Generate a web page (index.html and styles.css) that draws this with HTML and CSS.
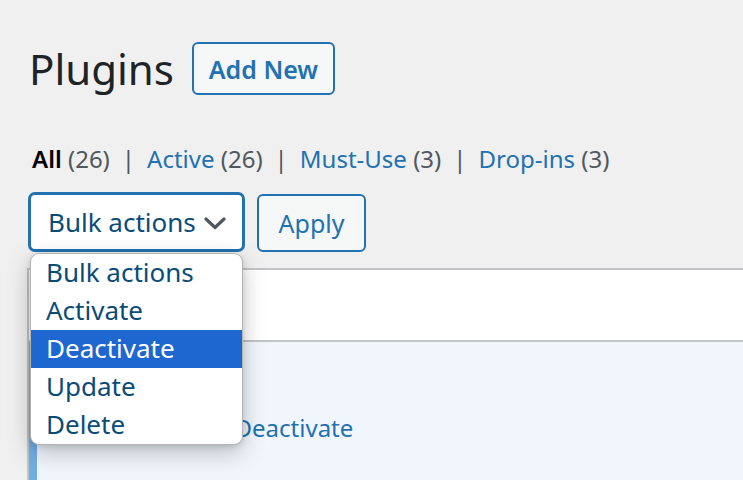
FILE: index.html
```html
<!DOCTYPE html>
<html lang="en">
<head>
<meta charset="utf-8">
<title>Plugins</title>
<link rel="stylesheet" href="styles.css">
</head>
<body>
<div class="wrap">
  <div class="header">
    <h1 class="title">Plugins</h1>
    <a class="btn add-new" href="#">Add New</a>
  </div>
  <ul class="filters">
    <li><a class="current" href="#">All <span class="count">(26)</span></a><span class="sep">|</span></li>
    <li><a href="#">Active <span class="count">(26)</span></a><span class="sep">|</span></li>
    <li><a href="#">Must-Use <span class="count">(3)</span></a><span class="sep">|</span></li>
    <li><a href="#">Drop-ins <span class="count">(3)</span></a></li>
  </ul>
  <div class="tablenav">
    <div class="select-wrap">
      <div class="select">
        <span>Bulk actions</span>
        <svg class="chev" width="22" height="13" viewBox="0 0 22 13"><polyline points="2,2 11,10.5 20,2" fill="none" stroke="#50575e" stroke-width="3.2" stroke-linecap="round" stroke-linejoin="round"/></svg>
      </div>
      <ul class="dropdown">
        <li>Bulk actions</li>
        <li>Activate</li>
        <li class="sel">Deactivate</li>
        <li>Update</li>
        <li>Delete</li>
      </ul>
    </div>
    <a class="btn apply" href="#">Apply</a>
  </div>
  <div class="table">
    <div class="thead"></div>
    <div class="row active">
      <div class="check"></div>
      <div class="plugin">
        <div class="actions"><a href="#">Settings</a><span class="sep2">|</span><a href="#">Deactivate</a></div>
      </div>
    </div>
  </div>
</div>
</body>
</html>
```
FILE: styles.css
```css
* { box-sizing: border-box; }
html, body { margin: 0; padding: 0; }
body {
  background: #f0f0f1;
  font-family: "Noto Sans", "Open Sans", sans-serif;
  color: #1d2327;
  width: 743px;
  height: 480px;
  overflow: hidden;
}
a { text-decoration: none; color: #2271b1; }
.wrap { padding-left: 28px; }
.header {
  display: flex;
  align-items: center;
  gap: 18px;
  padding-top: 42px;
}
.title {
  margin: 0 0 0 1px;
  font-weight: 400;
  font-size: 42px;
  line-height: 53px;
  color: #1d2327;
}
.btn {
  display: inline-flex;
  align-items: center;
  justify-content: center;
  border: 2px solid #2271b1;
  border-radius: 6px;
  background: #f6f7f7;
  color: #2271b1;
}
.add-new {
  width: 143px;
  height: 53px;
  font-size: 25px;
  font-weight: 600;
}
.filters {
  list-style: none;
  margin: 46px 0 0 4px;
  padding: 0;
  display: flex;
  font-size: 24px;
  line-height: 36px;
}
.filters li { display: flex; }
.filters .count { color: #50575e; }
.filters .current { color: #000; font-weight: 600; }
.filters .current .count { font-weight: 400; }
.sep { color: #50575e; margin: 0 12px; }
.tablenav {
  display: flex;
  align-items: flex-end;
  gap: 12px;
  margin-top: 15px;
}
.select-wrap { position: relative; }
.select {
  width: 217px;
  height: 60px;
  border: 3px solid #2271b1;
  border-radius: 7px;
  background: #fff;
  display: flex;
  align-items: center;
  justify-content: space-between;
  padding: 0 16px 0 17px;
  font-size: 26px;
  color: #0a4b78;
}
.chev { margin-top: 2px; }
.apply {
  width: 109px;
  height: 58px;
  font-size: 25px;
}
.dropdown {
  position: absolute;
  top: 61px;
  left: 2px;
  width: 213px;
  margin: 0;
  padding: 0;
  list-style: none;
  background: #fff;
  border: 1px solid #b4b4b4;
  border-radius: 9px;
  overflow: hidden;
  box-shadow: 0 8px 24px rgba(0,0,0,0.22), 0 2px 6px rgba(0,0,0,0.12);
  z-index: 5;
  font-size: 26px;
  color: #0a4b78;
}
.dropdown li {
  height: 38px;
  line-height: 36px;
  padding-left: 15px;
}
.dropdown li.sel { background: #1e66d0; color: #fff; }
.table {
  margin-top: 16px;
  margin-left: -1px;
  border-top: 2px solid #c3c4c7;
  border-left: 2px solid #c3c4c7;
}
.thead {
  height: 72px;
  background: #fff;
  border-bottom: 2px solid #c3c4c7;
}
.row { display: flex; height: 138px; background: #f0f6fc; }
.check { width: 8px; background: #72aee6; }
.plugin { padding: 68px 0 0 77px; }
.actions { font-size: 24px; line-height: 36px; }
.sep2 { color: #a7aaad; margin: 0 8px; }
```
